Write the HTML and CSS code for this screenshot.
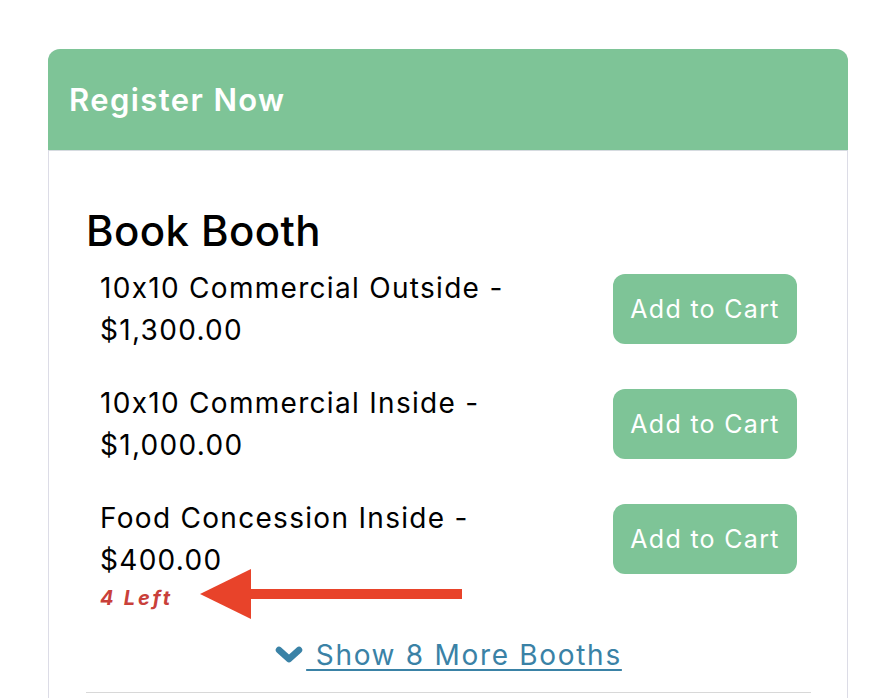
FILE: index.html
```html
<!DOCTYPE html>
<html>
<head>
<meta charset="utf-8">
<link rel="stylesheet" href="styles.css">
</head>
<body>
<div class="page">
  <div class="card">
    <div class="card-header">Register Now</div>
    <div class="card-body">
      <h2 class="title">Book Booth</h2>
      <div class="booths">
        <div class="booth">
          <div class="booth-info">
            <div class="booth-name">10x10 Commercial Outside -<br>$1,300.00</div>
          </div>
          <button class="btn">Add to Cart</button>
        </div>
        <div class="booth">
          <div class="booth-info">
            <div class="booth-name">10x10 Commercial Inside -<br>$1,000.00</div>
          </div>
          <button class="btn">Add to Cart</button>
        </div>
        <div class="booth">
          <div class="booth-info">
            <div class="booth-name">Food Concession Inside -<br>$400.00</div>
            <div class="left">4 Left</div>
            <svg class="annot-arrow" width="264" height="52" viewBox="0 0 264 52">
              <polygon points="0,26 51,1 51,51" fill="#E8432A"/>
              <rect x="48" y="21" width="214" height="10" fill="#E8432A"/>
            </svg>
          </div>
          <button class="btn">Add to Cart</button>
        </div>
      </div>
      <div class="more">
        <a class="more-link" href="#"><svg class="chev" width="28" height="18" viewBox="0 0 28 18"><path d="M4 4 L14 13 L24 4" fill="none" stroke="#3A82A6" stroke-width="6.5" stroke-linecap="round" stroke-linejoin="round"/></svg><span class="more-text"> Show 8 More Booths</span></a>
      </div>
      <hr class="divider">
    </div>
  </div>
</div>
</body>
</html>
```

FILE: styles.css
```css
html, body {
  margin: 0;
  padding: 0;
  background: #ffffff;
}
body {
  font-family: Inter, "Noto Sans", "Liberation Sans", sans-serif;
  color: #000;
}
.page {
  padding: 49px 48px 0 48px;
}
.card {
  width: 800px;
  box-sizing: border-box;
  border: 1px solid #dcdce6;
  border-top: none;
  border-radius: 12px 12px 0 0;
  height: 700px;
}
.card-header {
  background: #7EC497;
  color: #fff;
  height: 101px;
  margin: 0 -1px;
  border-radius: 12px 12px 0 0;
  display: flex;
  align-items: center;
  padding: 0 21px;
  font-size: 31px;
  font-weight: 600;
  letter-spacing: 1.4px;
  border-bottom: 1px solid #d6dbe0;
}
.card-body {
  padding: 55px 36px 0 37px;
}
.title {
  margin: 0;
  font-size: 42px;
  font-weight: 500;
  line-height: 50px;
  letter-spacing: 0.4px;
}
.booths {
  display: flex;
  flex-direction: column;
  gap: 31px;
  padding: 11px 14px 0 14px;
}
.booth {
  display: flex;
  justify-content: space-between;
  align-items: flex-start;
}
.booth-info {
  position: relative;
}
.booth-name {
  font-size: 28px;
  line-height: 42px;
  letter-spacing: 1.3px;
}
.left {
  color: #C9403A;
  font-style: italic;
  font-weight: 700;
  font-size: 20px;
  letter-spacing: 2.8px;
  line-height: 34px;
}
.annot-arrow {
  position: absolute;
  left: 100px;
  top: 71px;
}
.btn {
  margin-top: 7px;
  width: 184px;
  height: 70px;
  border: none;
  border-radius: 12px;
  background: #7EC497;
  color: #fff;
  font-family: inherit;
  font-size: 25px;
  letter-spacing: 1.3px;
  padding: 0;
}
.more {
  text-align: center;
  padding-top: 23px;
  height: 54px;
}
.more-link {
  color: #3A82A6;
  font-size: 28px;
  letter-spacing: 1.7px;
  text-decoration: none;
  display: inline-flex;
  align-items: center;
}
.more-text {
  text-decoration: underline;
  text-decoration-thickness: 2px;
  text-underline-offset: 4px;
  white-space: pre;
}
.chev {
  margin-right: 3px;
}
.divider {
  margin: 0;
  border: none;
  border-top: 1px solid #d8d8d8;
}
```
